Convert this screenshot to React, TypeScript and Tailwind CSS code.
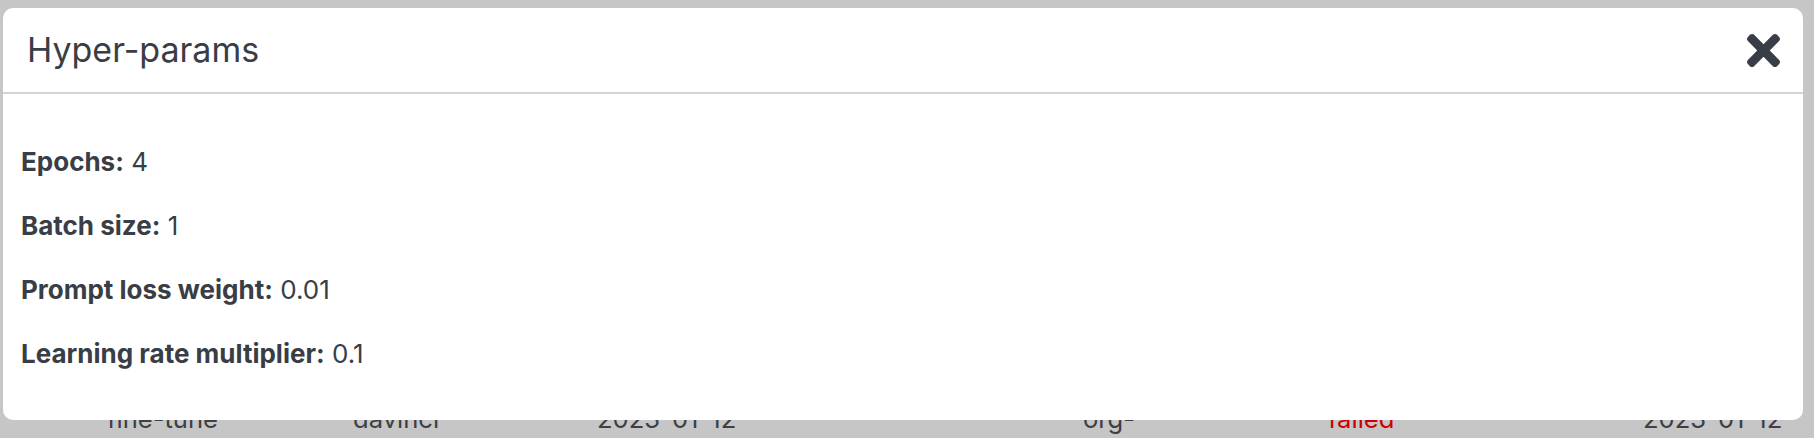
import React from "react";

const font = { fontFamily: "Inter, 'Noto Sans', 'Liberation Sans', sans-serif" };

function CloseIcon() {
  return (
    <svg width="33" height="33" viewBox="0 80 352 352" fill="#393e46" aria-hidden="true">
      <path d="M242.72 256l100.07-100.07c12.28-12.28 12.28-32.19 0-44.48l-22.24-22.24c-12.28-12.28-32.19-12.28-44.48 0L176 189.28 75.93 89.21c-12.28-12.28-32.19-12.28-44.48 0L9.21 111.450c-12.28 12.28-12.28 32.19 0 44.48L109.28 256 9.21 356.07c-12.28 12.28-12.28 32.19 0 44.48l22.24 22.24c12.28 12.28 32.2 12.28 44.48 0L176 322.720l100.07 100.07c12.28 12.28 32.2 12.28 44.48 0l22.24-22.24c12.28-12.28 12.28-32.19 0-44.48L242.72 256z" />
    </svg>
  );
}

const params: [string, string][] = [
  ["Epochs:", "4"],
  ["Batch size:", "1"],
  ["Prompt loss weight:", "0.01"],
  ["Learning rate multiplier:", "0.1"],
];

export default function App() {
  return (
    <div className="relative w-[1814px] h-[438px] overflow-hidden bg-[#c5c6c5]" style={font}>
      {/* background page (dimmed by backdrop) */}
      <div className="pt-[400px]">
        <div className="flex pl-[107px] text-[25.6px] leading-[38.4px] text-[#3d4046]">
          <div className="w-[246px]">fine-tune</div>
          <div className="w-[244px]">davinci</div>
          <div className="w-[486px]">2023-01-12</div>
          <div className="w-[245px]">org-</div>
          <div className="w-[315px] text-[#cc0000]">failed</div>
          <div>2023-01-12</div>
        </div>
      </div>

      {/* modal */}
      <div className="absolute left-[3px] top-[8px] w-[1800px] h-[412px] rounded-[10px] bg-white flex flex-col">
        <div className="h-[86px] flex items-center justify-between pl-[24px] pr-[23px] border-b-2 border-[#d4d4d4]">
          <h4 className="text-[34px] leading-[40px] font-normal text-[#393e46]">Hyper-params</h4>
          <button className="flex items-center justify-center w-[34px] h-[34px]">
            <CloseIcon />
          </button>
        </div>
        <div className="pl-[18px] pt-[49px] flex flex-col gap-[25.6px] text-[26px] leading-[38.4px] text-[#393e46]">
          {params.map(([k, v]) => (
            <p key={k}>
              <span className="font-bold">{k}</span> {v}
            </p>
          ))}
        </div>
      </div>
    </div>
  );
}
